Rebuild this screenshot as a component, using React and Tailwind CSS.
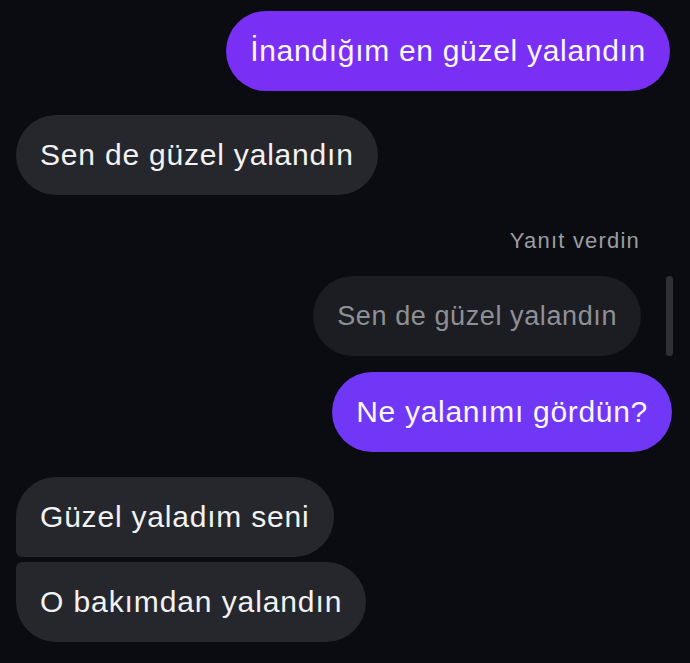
import React from "react";

const font = { fontFamily: "'Liberation Sans', Arial, sans-serif" };

const App = () => {
    return (
        <div className="w-[690px] h-[663px] bg-[#0b0c11] overflow-hidden pt-[11px] px-4 flex flex-col" style={font}>
            {/* outgoing */}
            <div className="flex justify-end pr-[4px]">
                <div className="bg-[#7a2ff5] text-[#fbf7ff] text-[30px] leading-[36px] tracking-[0.7px] px-6 py-[22px] rounded-full whitespace-nowrap">
                    İnandığım en güzel yalandın
                </div>
            </div>

            {/* incoming */}
            <div className="flex justify-start mt-[24px]">
                <div className="bg-[#26272c] text-[#f2f2f4] text-[30px] leading-[36px] tracking-[0.8px] px-6 py-[22px] rounded-full whitespace-nowrap">
                    Sen de güzel yalandın
                </div>
            </div>

            {/* reply section */}
            <div className="flex justify-end mt-[33px] pr-[34px]">
                <span className="text-[#9c9da2] text-[22px] leading-[26px] tracking-[1.2px]">Yanıt verdin</span>
            </div>
            <div className="flex justify-end items-center gap-[25px] mt-[22px] pr-[1px]">
                <div className="bg-[#1c1d22] text-[#8f9095] text-[27px] leading-[36px] tracking-[0.6px] px-6 py-[22px] rounded-full whitespace-nowrap">
                    Sen de güzel yalandın
                </div>
                <div className="w-[7px] h-[80px] rounded-full bg-[#2f3036]"></div>
            </div>
            <div className="flex justify-end mt-[16px] pr-[2px]">
                <div className="bg-[#7137f6] text-[#fbf7ff] text-[30px] leading-[36px] tracking-[0.7px] px-6 py-[22px] rounded-full whitespace-nowrap">
                    Ne yalanımı gördün?
                </div>
            </div>

            {/* incoming group */}
            <div className="flex flex-col items-start gap-[5px] mt-[25px]">
                <div className="bg-[#26272c] text-[#f2f2f4] text-[30px] leading-[36px] tracking-[0.8px] px-6 py-[22px] rounded-l-[6px] rounded-tl-[40px] rounded-r-[40px] whitespace-nowrap">
                    Güzel yaladım seni
                </div>
                <div className="bg-[#26272c] text-[#f2f2f4] text-[30px] leading-[36px] tracking-[0.9px] px-6 py-[22px] rounded-l-[6px] rounded-bl-[40px] rounded-r-[40px] whitespace-nowrap">
                    O bakımdan yalandın
                </div>
            </div>
        </div>
    );
};

export default App;
